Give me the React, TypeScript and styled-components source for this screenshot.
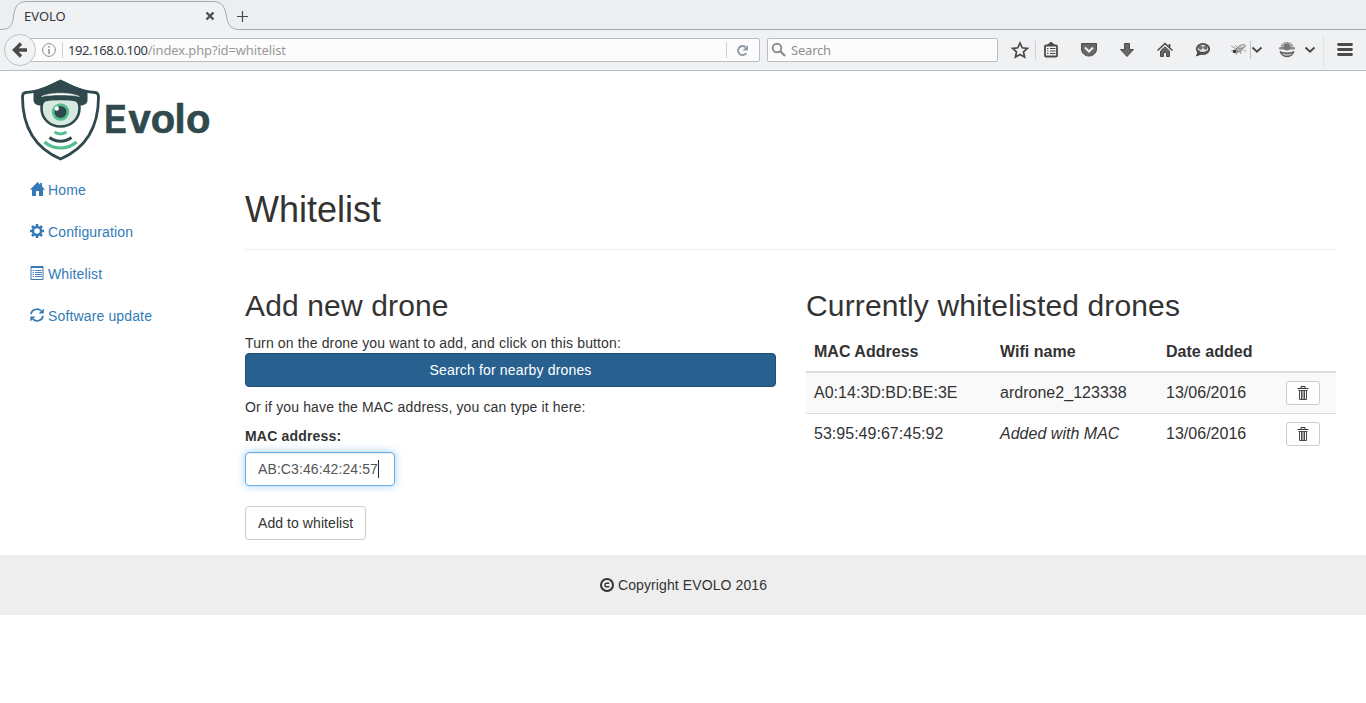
import React from 'react';
import styled, { createGlobalStyle } from 'styled-components';

const Global = createGlobalStyle`
  * { box-sizing: border-box; }
  body { margin: 0; background: #fff; color: #333; font: 14px/20px "Liberation Sans", Arial, sans-serif; letter-spacing: .14px; }
`;

const Chrome = styled.header`
  font-family: "Noto Sans", sans-serif;
  font-size: 13px;
  letter-spacing: 0;
  height: 71px;
  background: #f0f1f3;
  border-bottom: 1px solid #b8bfc3;
`;
const TabStrip = styled.div`
  position: relative;
  height: 30px;
  display: flex;
  background: #edeef0;
  svg { position: absolute; left: 0; top: 0; }
`;
const Tab = styled.div`
  position: relative;
  width: 203px;
  padding: 7px 0 0 24px;
  line-height: 19px;
  font-size: 13px;
  color: #32373b;
`;
const Toolbar = styled.div`
  position: relative;
  display: flex;
  align-items: center;
  height: 40px;
  padding-left: 4px;
`;
const Back = styled.div`
  position: relative;
  z-index: 1;
  width: 32px;
  height: 32px;
  border: 1px solid #bcc3c7;
  border-radius: 50%;
  background: #f2f3f4;
  svg { display: block; }
`;
const UrlBar = styled.div`
  display: flex;
  align-items: center;
  width: 734px;
  height: 24px;
  margin-left: -10px;
  padding-left: 15px;
  border: 1px solid #b8bfc4;
  border-radius: 0 2px 2px 0;
  background: #fcfcfc;
  color: #999;
`;
const Divider = styled.i<{ $left?: number; $right?: number }>`
  width: 1px;
  height: 16px;
  margin: 0 ${p => p.$right ?? 5}px 0 ${p => p.$left ?? 6}px;
  background: #cdd0d2;
`;
const Url = styled.span`
  flex: 1;
  line-height: 22px;
  letter-spacing: -0.14px;
  b { font-weight: 400; color: #333a3f; letter-spacing: -0.4px; }
`;
const Reload = styled.span`
  display: flex;
  width: 23px;
`;
const SearchBar = styled.div`
  display: flex;
  align-items: center;
  width: 231px;
  height: 24px;
  margin-left: 7px;
  padding-left: 3px;
  gap: 4px;
  border: 1px solid #b8bfc4;
  border-radius: 2px;
  background: #fcfcfc;
  color: #8f8f8f;
  letter-spacing: -0.2px;
`;
const ToolIcons = styled.div`
  flex: none;
  height: 40px;
  svg { display: block; }
`;

const Logo = styled.div`
  height: 95px;
  padding-left: 20px;
  svg { display: block; }
`;
const Layout = styled.div`
  display: flex;
  height: 389px;
  padding: 0 30px 0 15px;
`;
const Side = styled.nav`
  width: 230px;
  padding-top: 3px;
`;
const NavLink = styled.a`
  display: flex;
  gap: 3px;
  height: 42px;
  padding: 11px 15px;
  color: #337ab7;
  svg { margin-top: 2px; }
`;
const Main = styled.main`
  flex: 1;
`;
const PageHead = styled.h1`
  margin: 0;
  height: 84px;
  padding-top: 24px;
  border-bottom: 1px solid #eee;
  font-size: 36px;
  line-height: 39px;
  font-weight: 400;
  letter-spacing: 0;
`;
const Columns = styled.div`
  display: grid;
  grid-template-columns: 531px 530px;
  gap: 30px;
  padding-top: 39px;
`;
const Heading = styled.h2`
  margin: 0 0 11px;
  font-size: 30px;
  line-height: 33px;
  font-weight: 400;
`;
const Text = styled.p<{ $spaced?: boolean }>`
  margin: ${p => (p.$spaced ? 10 : 0)}px 0 0;
`;
const Button = styled.button<{ $primary?: boolean; $small?: boolean }>`
  display: ${p => (p.$primary ? 'block' : 'inline-flex')};
  justify-content: center;
  align-items: center;
  width: ${p => (p.$primary ? '100%' : 'auto')};
  height: ${p => (p.$small ? 24 : 34)}px;
  padding: 0 ${p => (p.$small ? 10 : 12)}px;
  border: 1px solid ${p => (p.$primary ? '#204d74' : '#ccc')};
  border-radius: ${p => (p.$small ? 3 : 4)}px;
  background: ${p => (p.$primary ? '#286090' : '#fff')};
  color: ${p => (p.$primary ? '#fff' : '#333')};
  font: inherit;
  letter-spacing: ${p => (p.$primary ? 0.17 : 0.07)}px;
`;
const Label = styled.label`
  display: block;
  margin: 9px 0 6px;
  font-weight: 700;
  letter-spacing: .18px;
`;
const Field = styled.div`
  display: flex;
  align-items: center;
  width: 150px;
  height: 34px;
  margin-bottom: 20px;
  padding-left: 12px;
  border: 1px solid #66afe9;
  border-radius: 4px;
  box-shadow: inset 0 1px 1px rgba(0,0,0,.075), 0 0 8px rgba(102,175,233,.6);
  color: #555;
  letter-spacing: .1px;
`;
const Caret = styled.i`
  width: 1px;
  height: 18px;
  background: #222;
`;
const Table = styled.table`
  width: 530px;
  table-layout: fixed;
  border-collapse: separate;
  border-spacing: 0;
  font-size: 16px;
  line-height: 23px;
  letter-spacing: .02px;
  th, td { text-align: left; vertical-align: top; }
  th { padding: 7px 8px 8px; border-bottom: 2px solid #ddd; height: 40px; }
  td { height: 40px; padding: 8px 8px 7px; }
  tbody tr + tr td { height: 41px; border-top: 1px solid #ddd; }
  tbody tr:first-child { background: #f9f9f9; }
  button { display: flex; }
`;
const Footer = styled.footer`
  display: flex;
  justify-content: center;
  align-items: center;
  gap: 4px;
  height: 60px;
  padding-left: 1px;
  background: #eee;
  letter-spacing: .1px;
`;

const HomeIcon = () => (
  <svg width="15" height="14" viewBox="0 0 15 14" fill="currentColor">
    <path d="M7.500 0 10.200 2.700V1h1.900v3.600L15 7.800H13V14H9V9H6v5H2V7.800H0z" />
  </svg>
);
const CogIcon = () => (
  <svg width="15" height="14" viewBox="0 0 15 14" fill="none" stroke="currentColor">
    <circle cx="7" cy="7" r="4" strokeWidth="2.400" />
    <g strokeWidth="2.600">
      <path d="M7 0v2.400M7 11.600V14M0 7h2.400M11.600 7H14M2 2l1.800 1.800M10.200 10.200 12 12M12 2l-1.800 1.800M3.800 10.200 2 12" />
    </g>
  </svg>
);
const ListIcon = () => (
  <svg width="15" height="14" viewBox="0 0 15 14" fill="none" stroke="currentColor">
    <path d="M1 .5h12v13H1zM1 1.500h12" />
    <path d="M2.500 4.500H4M5 4.500h7M2.500 6.500H4M5 6.500h7M2.500 8.500H4M5 8.500h7M2.500 10.500H4M5 10.500h7" strokeWidth=".9" />
  </svg>
);
const RefreshIcon = () => (
  <svg width="15" height="14" viewBox="0 0 15 14">
    <path d="M1 6.200A6 5.600 0 0 1 11.200 2.800M13 7.800A6 5.600 0 0 1 2.800 11.200" fill="none" stroke="currentColor" strokeWidth="1.700" />
    <path d="M13.800.4v5H8.600zM.3 13.600v-5h5.200z" fill="currentColor" />
  </svg>
);
const TrashIcon = () => (
  <svg width="12" height="14" viewBox="0 0 12 14" fill="none" stroke="#333">
    <path d="M0.500 2.500h11M4 2V.5h4V2" />
    <path d="M1.500 4.500h9M2.500 4.500v9h7v-9M4.500 5v8M6 5v8M7.500 5v8" strokeWidth=".9" />
  </svg>
);
const CopyrightIcon = () => (
  <svg width="14" height="14" viewBox="0 0 14 14" fill="none" stroke="#333">
    <circle cx="7" cy="7" r="6" strokeWidth="2" />
    <path d="M9.300 5.200H6.300C5.300 5.200 4.900 6 4.900 7s.4 1.800 1.400 1.800h3" strokeWidth="1.400" />
  </svg>
);

const TabShape = () => (
  <svg width="1366" height="30" viewBox="0 0 1366 30" fill="none">
    <path d="M0 29.500H2C10 29.500 12.500 25 13.500 17 14.500 8 16.500 1.500 27 1.500H213C223 1.500 225 8 226.500 17 228 25 231 29.500 239 29.500H1366V31H0z" fill="#f0f1f3" />
    <path d="M0 29.500H2C10 29.500 12.500 25 13.500 17 14.500 8 16.500 1.500 27 1.500H213C223 1.500 225 8 226.500 17 228 25 231 29.500 239 29.500H1366" stroke="#a5a9ac" />
    <path d="M206.500 12.500l7 7M213.500 12.500l-7 7" stroke="#4b5053" strokeWidth="2.400" />
    <path d="M237 16.500h11M242.500 11v11" stroke="#444a4e" strokeWidth="1.200" />
  </svg>
);

const BrowserIcons = () => (
  <svg width="368" height="40" viewBox="998 30 368 40" fill="none" stroke="#4a4a4a">
    <path d="M1020 43l2.200 4.800 5.200.6-3.900 3.500 1.100 5.100-4.600-2.600-4.600 2.600 1.100-5.100-3.900-3.500 5.200-.6z" strokeWidth="1.700" />
    <path d="M1035.500 41v18" stroke="#cdd0d2" />
    <rect x="1045" y="45.500" width="12" height="11" rx="1" strokeWidth="1.800" />
    <path d="M1047 45.500l4-3.500 4 3.500z" fill="#4a4a4a" />
    <path d="M1047 48.500h1.500M1050 48.500h5.500M1047 51h1.500M1050 51h5.500M1047 53.500h1.500M1050 53.500h5.500" strokeWidth="1.200" />
    <path d="M1081.500 43.500h15v5.500c0 4-3.500 7-7.500 7s-7.500-3-7.500-7z" fill="#686868" />
    <path d="M1085 47.500l4 4 4-4" stroke="#f0f1f3" strokeWidth="2" />
    <path d="M1124.500 43.500h5v6h4l-6.500 7-6.500-7h4z" fill="#686868" />
    <path d="M1157.500 50.500l7.500-7 7.500 7" strokeWidth="1.600" />
    <path d="M1160.500 51l4.500-4.200 4.500 4.200v5.500h-3v-4h-3v4h-3z" fill="#686868" />
    <path d="M1169.500 44v3" strokeWidth="1.800" />
    <ellipse cx="1203" cy="49" rx="6.200" ry="5.200" fill="#dedfdf" strokeWidth="1.800" />
    <path d="M1198 52l-1.500 4 4.500-2" fill="#444" />
    <circle cx="1200.500" cy="47.500" r="1.600" fill="#888" /><circle cx="1205.500" cy="47.500" r="1.600" fill="#888" />
    <path d="M1198.500 50.500c2 3 7 3 9 0" strokeWidth="1.300" />
    <g stroke="#888" strokeWidth=".8">
      <ellipse cx="1239" cy="49.500" rx="4.500" ry="2.300" transform="rotate(-25 1239 49.500)" fill="#aaa" />
      <ellipse cx="1242" cy="46.500" rx="3.800" ry="1.700" fill="#ccc" transform="rotate(-15 1242 46.500)" />
      <path d="M1231 46l6 3M1231 51l5-1M1236 55l2-4M1241 54l-1-3M1244 51h2M1235 45l3 3" />
      <circle cx="1234.500" cy="51.500" r="1.700" fill="#333" stroke="none" />
    </g>
    <path d="M1250.500 41v18" stroke="#bfc2c4" />
    <path d="M1252.500 47.500l4.500 4.200 4.500-4.200M1305.500 47.500l4.500 4.200 4.500-4.200" strokeWidth="2" />
    <path d="M1281 46c2-4.500 10-4.500 12 0z" fill="#c5c5c5" stroke="#888" />
    <rect x="1279" y="47" width="16" height="2.600" rx="1.300" fill="#888" stroke="none" />
    <circle cx="1287" cy="47" r="3.400" fill="#777" stroke="none" />
    <path d="M1280 51.500c2 7 12 7 14 0-3 2-11 2-14 0z" fill="#777" stroke="#555" />
    <path d="M1283 54c2 1.300 6 1.300 8 0" stroke="#ddd" />
    <path d="M1323.500 35v31" stroke="#dfe1e2" />
    <path d="M1338.500 44.500h13M1338.500 49.500h13M1338.500 54.500h13" strokeWidth="2.800" strokeLinecap="round" />
  </svg>
);

const EvoloLogo = () => (
  <svg width="200" height="95" viewBox="20 71 200 95" fill="none">
    <path d="M60.500 81L73 87C80 90 88 92 95 92.500 97.500 92.700 98.500 94 98.500 97 98.500 128 86 148 60.500 159 35 148 22.500 128 22.500 97 22.500 94 23.500 92.700 26 92.500 33 92 41 90 48 87z" stroke="#2f494d" strokeWidth="2.800" />
    <path d="M60.500 80L75 86.500 87.500 91V100C87.500 104 84 105.500 80 105.500H41C37 105.500 33.500 104 33.500 100V91L46 86.500z" fill="#2f494d" />
    <path d="M44.500 100.500C52 98.500 69 98.500 76.500 100.500 78.500 102 79.500 105 79.500 108 79.500 119 71 126.500 60.500 126.500S41.500 119 41.500 108C41.500 105 42.500 102 44.500 100.500z" fill="#d8eadf" stroke="#2f494d" strokeWidth="2.600" />
    <path d="M41.500 96.500C50 92 71 92 79.500 96.500 71 94.500 50 94.500 41.500 96.500z" fill="#fff" stroke="#fff" strokeWidth=".4" />
    <circle cx="60.500" cy="112" r="7.400" fill="#2f494d" stroke="#55bd90" strokeWidth="2.600" />
    <circle cx="56.700" cy="108.500" r="2.200" fill="#fff" />
    <path d="M54.500 132c3.500 2.500 8.500 2.500 12 0" stroke="#55bd90" strokeWidth="3" />
    <path d="M49.500 137.500c6.500 5 15.500 5 22 0" stroke="#2f494d" strokeWidth="3" />
    <path d="M44.500 142c9 8 23 8 32 0" stroke="#55bd90" strokeWidth="3.200" />
    <g fill="#2f494d" stroke="#2f494d" strokeWidth=".6" fontFamily="Liberation Sans, sans-serif" fontWeight="700" fontSize="40">
      <text style={{ letterSpacing: 0 }} transform="translate(104.200 133) scale(.84 1)">E</text>
      <text style={{ letterSpacing: 0 }} x="128.500 150.800 174.500 186" y="133">volo</text>
    </g>
  </svg>
);

export default function App() {
  return (
    <>
      <Global />
      <Chrome>
        <TabStrip>
          <TabShape />
          <Tab>EVOLO</Tab>
        </TabStrip>
        <Toolbar>
          <Back>
            <svg width="30" height="30" viewBox="0 0 30 30" fill="none" stroke="#4a4a4a" strokeWidth="3.400">
              <path d="M16 8.500l-6.500 6.500 6.500 6.500M10 15h12" />
            </svg>
          </Back>
          <UrlBar>
            <svg width="14" height="14" viewBox="0 0 14 14" fill="none" stroke="#8f8f8f">
              <circle cx="7" cy="7" r="6.400" /><path d="M7 6v5M7 3v1.700" strokeWidth="1.500" />
            </svg>
            <Divider />
            <Url><b>192.168.0.100</b>/index.php?id=whitelist</Url>
            <Divider $left={9} $right={9} />
            <Reload>
              <svg width="13" height="13" viewBox="0 0 13 13" fill="none" stroke="#929ca5" strokeWidth="2">
                <path d="M9.500 3.200A4.500 4.500 0 1 0 10.300 9" /><path d="M12 1v5.500H6.500z" fill="#929ca5" stroke="none" />
              </svg>
            </Reload>
          </UrlBar>
          <SearchBar>
            <svg width="16" height="16" viewBox="0 0 16 16" fill="none" stroke="#8f8f8f" strokeWidth="2">
              <circle cx="6" cy="6" r="4.300" /><path d="M9 9l5 5" strokeWidth="2.400" />
            </svg>
            Search
          </SearchBar>
          <ToolIcons><BrowserIcons /></ToolIcons>
        </Toolbar>
      </Chrome>
      <Logo><EvoloLogo /></Logo>
      <Layout>
        <Side>
          <NavLink><HomeIcon />Home</NavLink>
          <NavLink><CogIcon />Configuration</NavLink>
          <NavLink><ListIcon />Whitelist</NavLink>
          <NavLink><RefreshIcon />Software update</NavLink>
        </Side>
        <Main>
          <PageHead>Whitelist</PageHead>
          <Columns>
            <section>
              <Heading>Add new drone</Heading>
              <Text>Turn on the drone you want to add, and click on this button:</Text>
              <Button $primary>Search for nearby drones</Button>
              <Text $spaced>Or if you have the MAC address, you can type it here:</Text>
              <Label>MAC address:</Label>
              <Field>AB:C3:46:42:24:57<Caret /></Field>
              <Button>Add to whitelist</Button>
            </section>
            <section>
              <Heading>Currently whitelisted drones</Heading>
              <Table>
                <colgroup><col width="186" /><col width="166" /><col width="120" /><col width="58" /></colgroup>
                <thead><tr><th>MAC Address</th><th>Wifi name</th><th>Date added</th><th /></tr></thead>
                <tbody>
                  <tr><td>A0:14:3D:BD:BE:3E</td><td>ardrone2_123338</td><td>13/06/2016</td><td><Button $small><TrashIcon /></Button></td></tr>
                  <tr><td>53:95:49:67:45:92</td><td><em>Added with MAC</em></td><td>13/06/2016</td><td><Button $small><TrashIcon /></Button></td></tr>
                </tbody>
              </Table>
            </section>
          </Columns>
        </Main>
      </Layout>
      <Footer><CopyrightIcon />Copyright EVOLO 2016</Footer>
    </>
  );
}
